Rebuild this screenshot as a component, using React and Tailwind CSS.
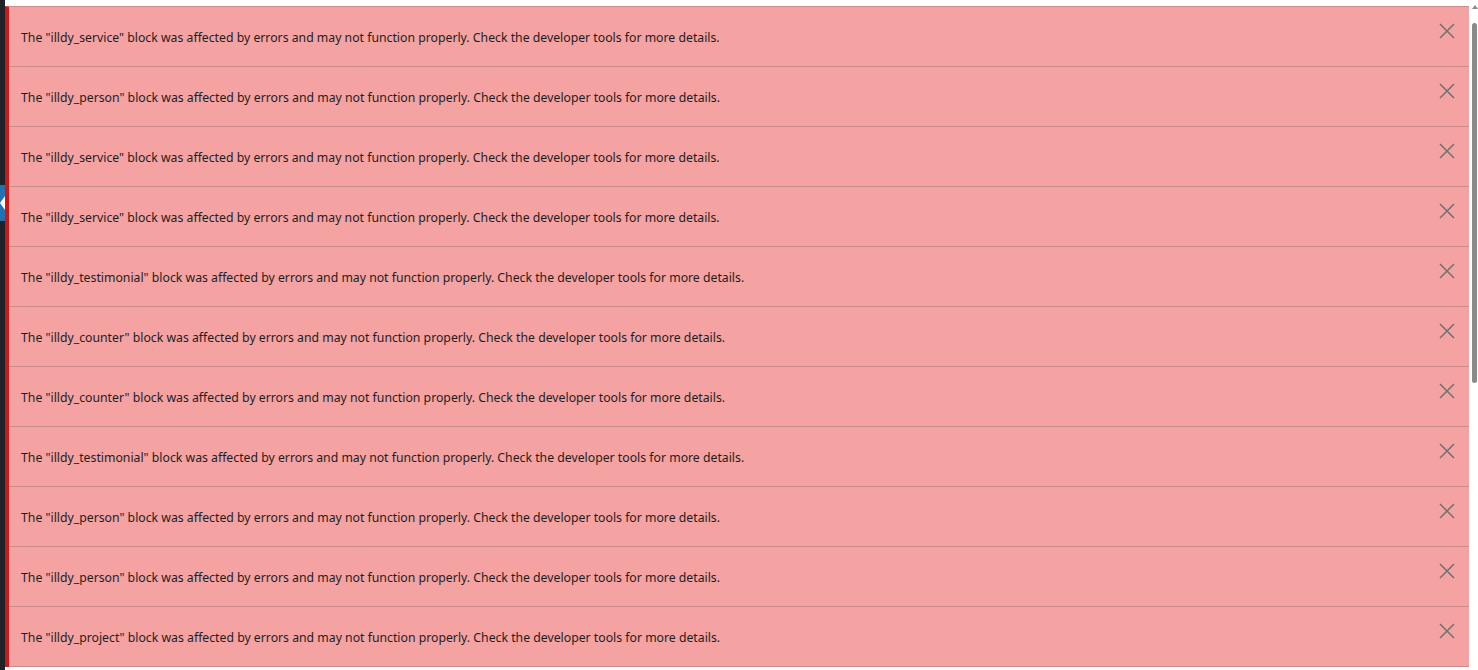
import React from "react";

const blocks = [
  "illdy_service",
  "illdy_person",
  "illdy_service",
  "illdy_service",
  "illdy_testimonial",
  "illdy_counter",
  "illdy_counter",
  "illdy_testimonial",
  "illdy_person",
  "illdy_person",
  "illdy_project",
];

const CloseIcon = () => (
  <svg width="16" height="16" viewBox="0 0 16 16" fill="none">
    <path d="M1 1L15 15M15 1L1 15" stroke="#707070" strokeWidth="1.5" />
  </svg>
);

const Notice = ({ name }) => (
  <div className="flex h-[60px] items-start border-b border-[#c98b8b] bg-[#f4a2a2]">
    <p className="pl-3 pt-[16px] text-[12.25px] leading-[30px] text-[#1e1e1e]">
      The "{name}" block was affected by errors and may not function properly. Check the developer tools for more details.
    </p>
    <button className="ml-auto mr-[14px] mt-4 flex h-[16px] w-[16px] items-center justify-center">
      <CloseIcon />
    </button>
  </div>
);

export default function App() {
  return (
    <div
      className="flex h-[670px] w-full overflow-hidden bg-[#f0f0f1]"
      style={{ fontFamily: '"Noto Sans", "Liberation Sans", sans-serif' }}
    >
      {/* admin sidebar edge */}
      <div className="flex w-[5px] shrink-0 flex-col bg-[#1d2327]">
        <div className="mt-[185px] flex h-[36px] items-center bg-[#2271b1]">
          <div className="h-0 w-0 border-y-[7px] border-r-[5px] border-y-transparent border-r-white" />
        </div>
      </div>

      {/* notices */}
      <div className="flex flex-1 flex-col bg-white pt-[6px]">
        <div className="border-l-4 border-t border-[#cc1818] border-t-[#c98b8b] bg-[#f4a2a2]">
          {blocks.map((name, i) => (
            <Notice key={i} name={name} />
          ))}
        </div>
      </div>

      {/* scrollbar */}
      <div className="flex w-[9px] shrink-0 flex-col items-center bg-white pl-[2px]">
        <div className="mt-[5px] h-0 w-0 border-x-[3px] border-b-[4px] border-x-transparent border-b-[#8a8a8a]" />
        <div className="mt-[14px] h-[360px] w-[5px] rounded-full bg-[#8a8a8a]" />
      </div>
    </div>
  );
}
